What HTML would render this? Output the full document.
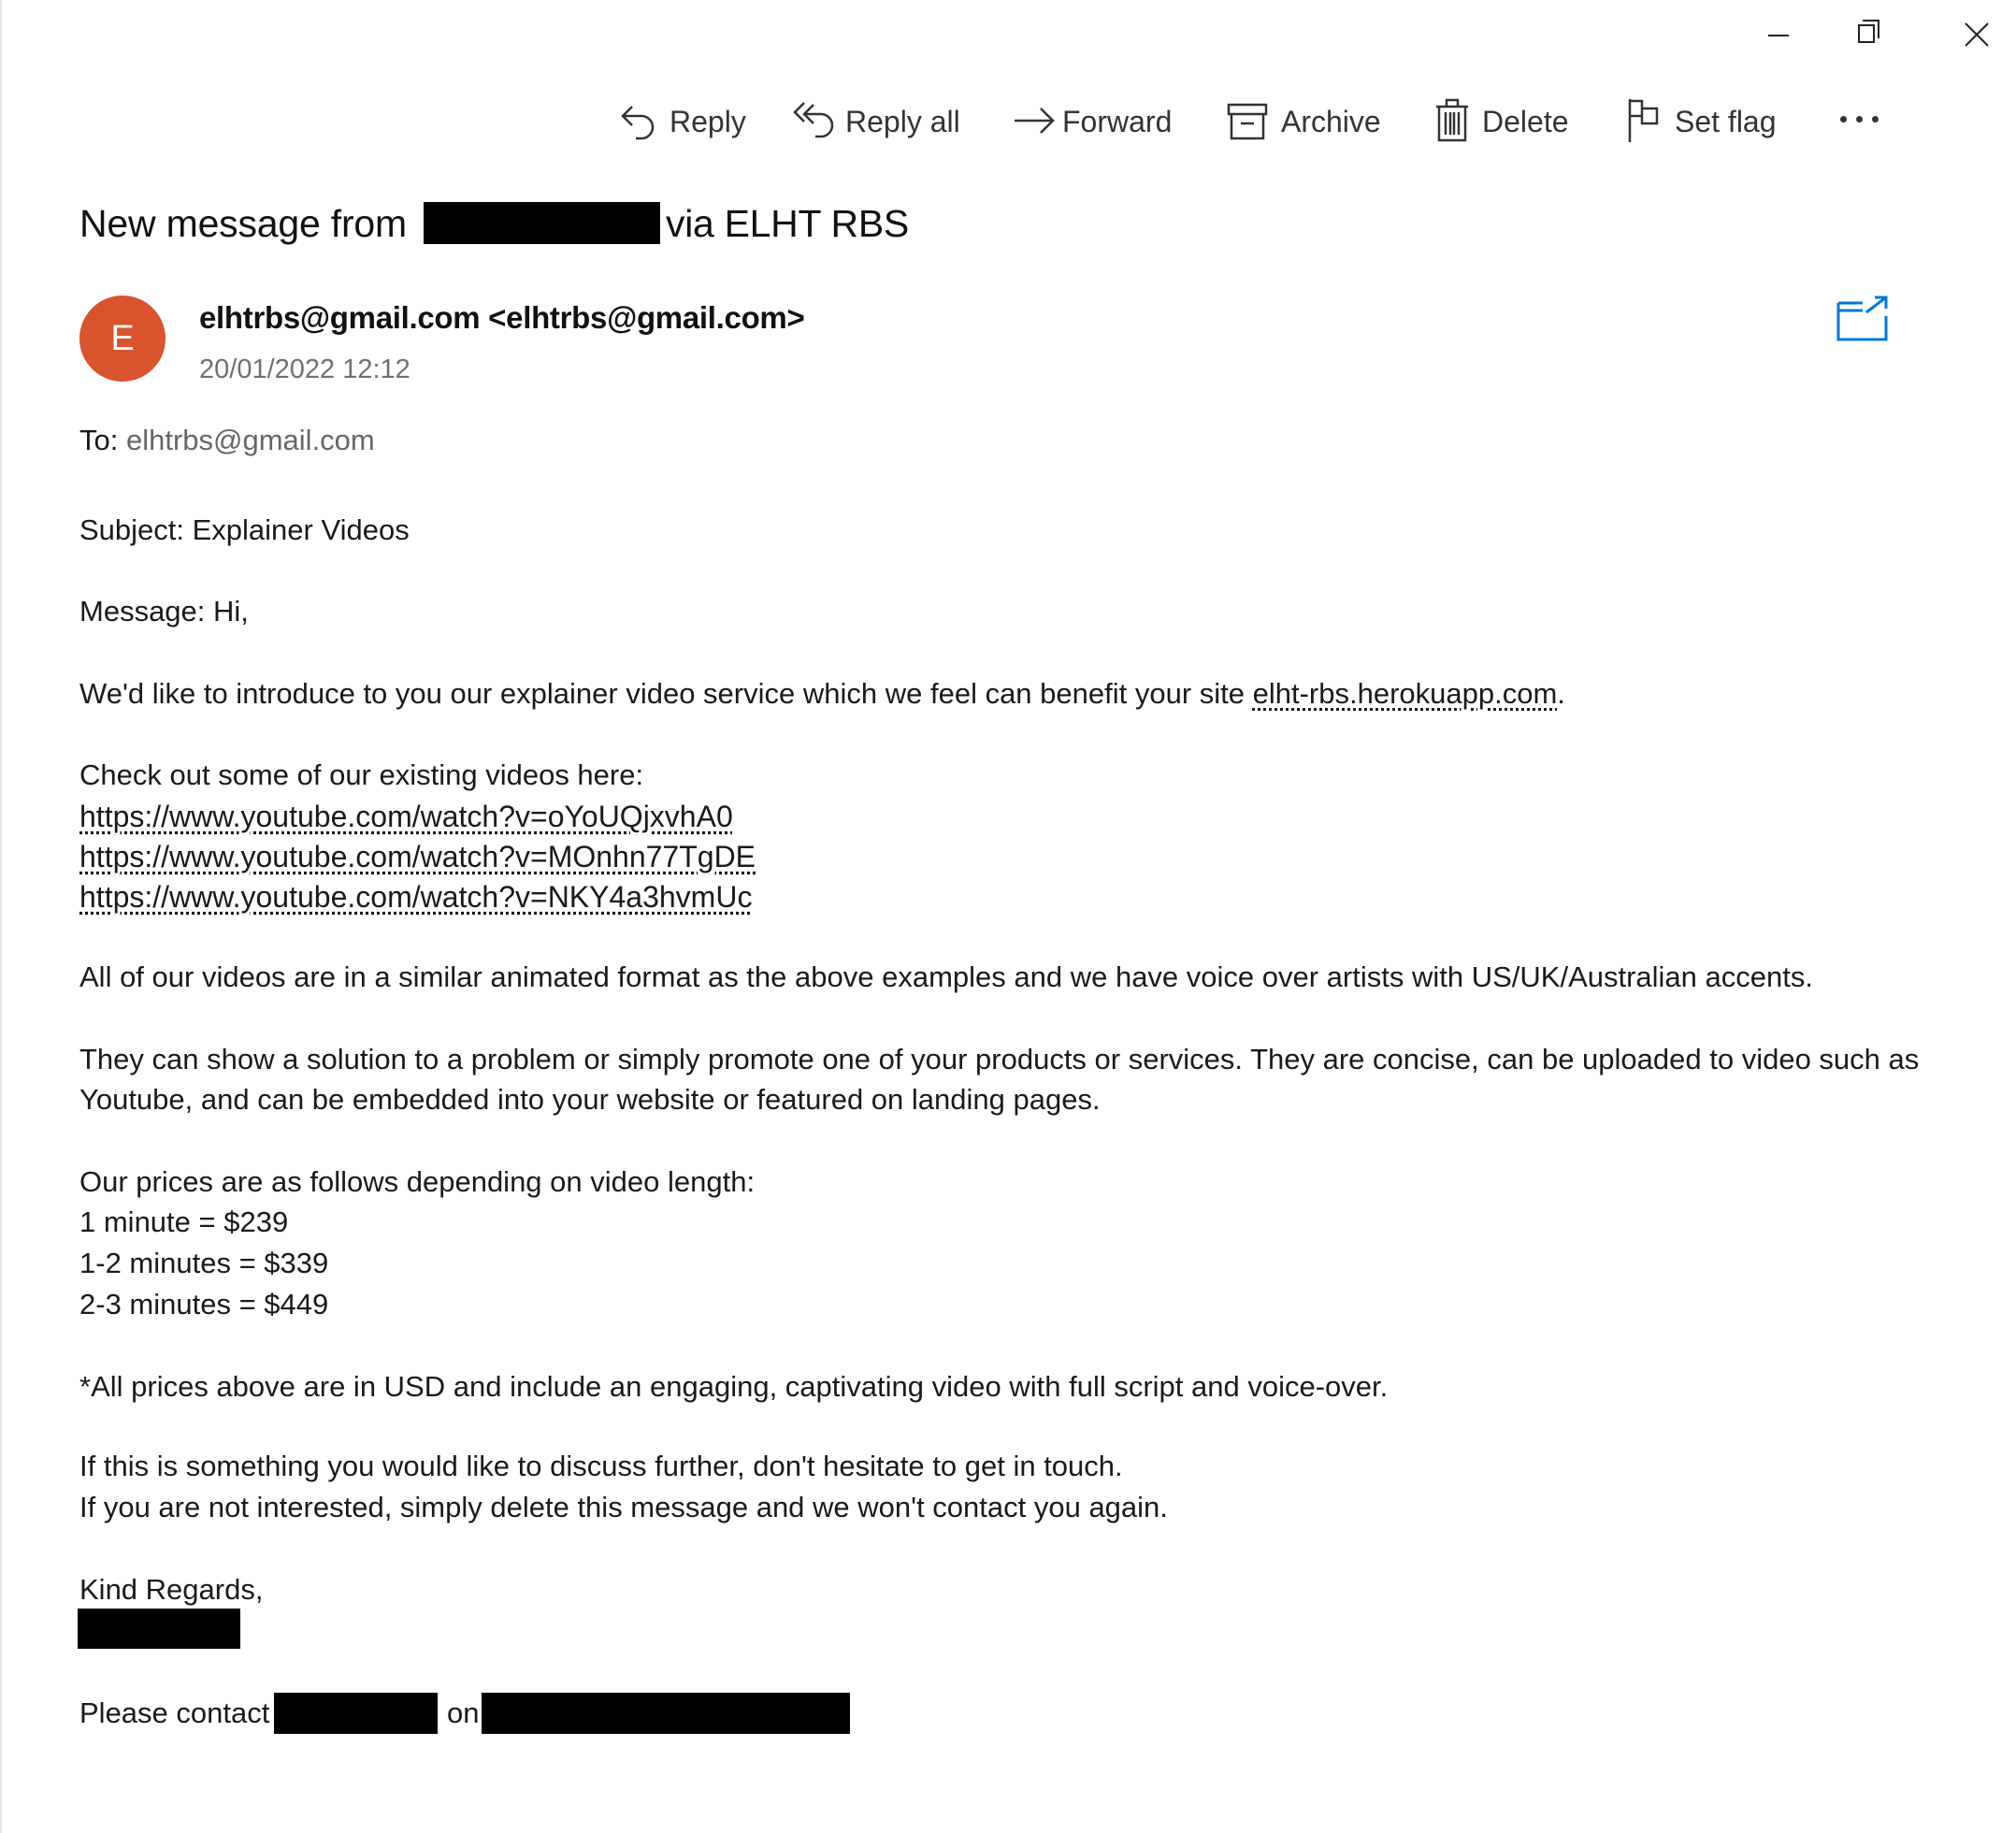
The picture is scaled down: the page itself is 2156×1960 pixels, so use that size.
<!DOCTYPE html>
<html><head><meta charset="utf-8"><style>
html,body{margin:0;padding:0;background:#fff;}
body{width:2156px;height:1960px;position:relative;overflow:hidden;font-family:"Liberation Sans",sans-serif;color:#1a1a1a;}
.a{position:absolute;white-space:nowrap;}
.l{position:absolute;left:85px;font-size:31px;line-height:44px;white-space:nowrap;}
.u{text-decoration:underline dotted;text-underline-offset:5px;}
.tb{position:absolute;top:108px;font-size:32px;line-height:44px;color:#333;}
.ic{position:absolute;}
.blk{position:absolute;background:#000;}
</style></head><body>
<div class="a" style="left:0;top:0;width:2px;height:1960px;background:#e6e6e6"></div>
<div class="blk" style="left:1891px;top:37px;width:22px;height:2px;background:#222"></div>
<div class="a" style="left:1987px;top:26px;width:18px;height:20px;border:2px solid #222;box-sizing:border-box"></div>
<div class="a" style="left:1992px;top:21px;width:18px;height:20px;border-top:2px solid #222;border-right:2px solid #222;box-sizing:border-box"></div>
<svg class="ic" style="left:2101px;top:24px" width="26" height="26"><path d="M1 1L25 25M25 1L1 25" stroke="#222" stroke-width="2"/></svg>

<svg class="ic" style="left:662px;top:108px" width="44" height="44" fill="none" stroke="#333" stroke-width="2.5"><path d="M14 6L4 16L14 26M4 16H24A12 12 0 0 1 24 40H18"/></svg>
<div class="tb" style="left:716px">Reply</div>
<svg class="ic" style="left:848px;top:106px" width="48" height="46" fill="none" stroke="#333" stroke-width="2.5"><path d="M12 4L2 14L12 24M22 6L12 16L22 26M12 16H30A12 12 0 0 1 30 40H24"/></svg>
<div class="tb" style="left:904px">Reply all</div>
<svg class="ic" style="left:1083px;top:112px" width="46" height="34" fill="none" stroke="#333" stroke-width="2.5"><path d="M2 17H42M30 4L43 17L30 30"/></svg>
<div class="tb" style="left:1136px">Forward</div>
<svg class="ic" style="left:1312px;top:110px" width="44" height="40" fill="none" stroke="#333" stroke-width="2.5"><path d="M2 2H42V12H2ZM5 12V38H39V12M15 22H29"/></svg>
<div class="tb" style="left:1370px">Archive</div>
<svg class="ic" style="left:1534px;top:104px" width="38" height="48" fill="none" stroke="#333" stroke-width="2.5"><path d="M2 10H36M13 10V3H25V10M5 10V46H33V10M12 16V40M17 16V40M21 16V40M26 16V40"/></svg>
<div class="tb" style="left:1585px">Delete</div>
<svg class="ic" style="left:1740px;top:104px" width="38" height="50" fill="none" stroke="#333" stroke-width="2.5"><path d="M3 2V48M3 4H16V12H32V28H16V20H3M16 4V20"/></svg>
<div class="tb" style="left:1791px">Set flag</div>
<div class="a" style="left:1968px;top:124px;width:7px;height:7px;border-radius:50%;background:#333"></div>
<div class="a" style="left:1985px;top:124px;width:7px;height:7px;border-radius:50%;background:#333"></div>
<div class="a" style="left:2002px;top:124px;width:7px;height:7px;border-radius:50%;background:#333"></div>

<div class="a" style="left:85px;top:214px;font-size:41px;line-height:50px;color:#111;letter-spacing:-0.2px">New message from</div>
<div class="blk" style="left:453px;top:216px;width:253px;height:45px"></div>
<div class="a" style="left:712px;top:214px;font-size:41px;line-height:50px;color:#111;letter-spacing:-0.3px">via ELHT RBS</div>

<div class="a" style="left:85px;top:316px;width:92px;height:92px;border-radius:50%;background:#d9532c;color:#fff;font-size:38px;line-height:92px;text-align:center">E</div>
<div class="a" style="left:213px;top:318px;font-size:33px;line-height:44px;color:#111;font-weight:bold;letter-spacing:-0.3px">elhtrbs@gmail.com &lt;elhtrbs@gmail.com&gt;</div>
<div class="a" style="left:213px;top:373px;font-size:29px;line-height:44px;color:#707070">20/01/2022 12:12</div>
<svg class="ic" style="left:1964px;top:316px" width="56" height="50" fill="none" stroke="#0078d7" stroke-width="3"><path d="M2 8H28M2 8V47H53V22M2 16H28M32 18L53 2M41 2H53V14"/></svg>

<div class="l" style="top:449px">To: <span style="color:#666">elhtrbs@gmail.com</span></div>

<div class="l" style="top:545px">Subject: Explainer Videos</div>
<div class="l" style="top:632px">Message: Hi,</div>
<div class="l" style="top:720px">We'd like to introduce to you our explainer video service which we feel can benefit your site <span class="u">elht-rbs.herokuapp.com</span>.</div>
<div class="l" style="top:807px">Check out some of our existing videos here:</div>
<div class="l u" style="top:851px;font-size:32px">https://www.youtube.com/watch?v=oYoUQjxvhA0</div>
<div class="l u" style="top:894px;font-size:32px">https://www.youtube.com/watch?v=MOnhn77TgDE</div>
<div class="l u" style="top:937px;font-size:32px">https://www.youtube.com/watch?v=NKY4a3hvmUc</div>
<div class="l" style="top:1023px">All of our videos are in a similar animated format as the above examples and we have voice over artists with US/UK/Australian accents.</div>
<div class="l" style="top:1111px">They can show a solution to a problem or simply promote one of your products or services. They are concise, can be uploaded to video such as</div>
<div class="l" style="top:1154px">Youtube, and can be embedded into your website or featured on landing pages.</div>
<div class="l" style="top:1242px">Our prices are as follows depending on video length:</div>
<div class="l" style="top:1285px">1 minute = $239</div>
<div class="l" style="top:1329px">1-2 minutes = $339</div>
<div class="l" style="top:1373px">2-3 minutes = $449</div>
<div class="l" style="top:1461px">*All prices above are in USD and include an engaging, captivating video with full script and voice-over.</div>
<div class="l" style="top:1546px">If this is something you would like to discuss further, don't hesitate to get in touch.</div>
<div class="l" style="top:1590px">If you are not interested, simply delete this message and we won't contact you again.</div>
<div class="l" style="top:1678px">Kind Regards,</div>
<div class="blk" style="left:83px;top:1720px;width:174px;height:43px"></div>
<div class="l" style="top:1810px">Please contact</div>
<div class="blk" style="left:293px;top:1810px;width:175px;height:44px"></div>
<div class="l" style="top:1810px;left:478px">on</div>
<div class="blk" style="left:515px;top:1810px;width:394px;height:44px"></div>
</body></html>
